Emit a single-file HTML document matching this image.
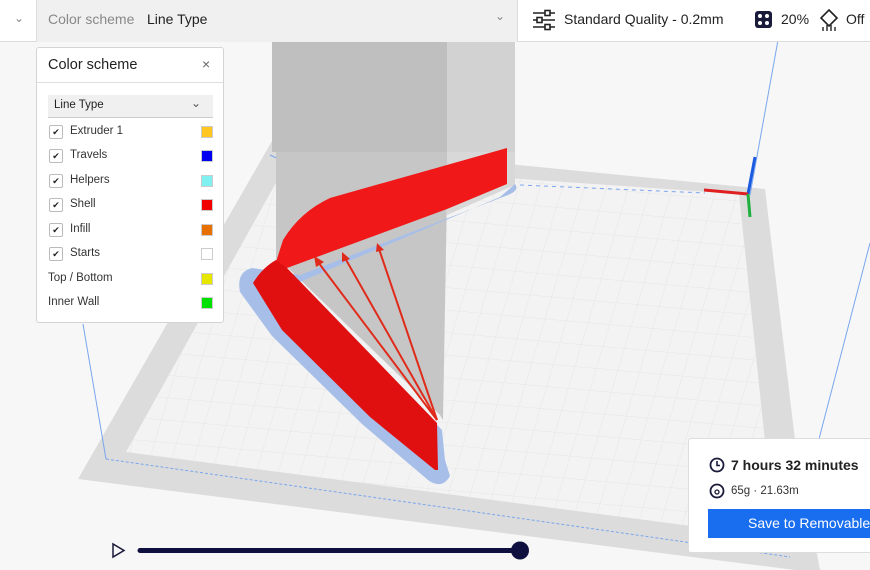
<!DOCTYPE html>
<html><head><meta charset="utf-8"><style>
*{margin:0;padding:0;box-sizing:border-box}
body{width:870px;height:570px;overflow:hidden;background:#f7f7f7;font-family:"Liberation Sans",sans-serif;position:relative;color:#222}
.top{position:absolute;left:0;top:0;width:870px;height:42px;background:#fff;border-bottom:1px solid #ddd}
.cs{position:absolute;left:36px;top:0;width:482px;height:42px;background:#f0f0f0;border-left:1px solid #ddd;border-right:1px solid #ddd}
.t{position:absolute;font-size:14px;white-space:nowrap}
.panel{position:absolute;left:36px;top:47px;width:188px;height:276px;background:#fff;border:1px solid #d4d4d4;border-radius:3px}
.row{position:absolute;left:12px;font-size:11.5px;color:#333}
.cb{position:absolute;left:12px;width:14px;height:14px;border:1px solid #bbb;border-radius:2px;background:#fff;font-size:9px;line-height:12px;text-align:center}
.sw{position:absolute;left:164px;width:12px;height:12px;border:1px solid #ccc}
.info{position:absolute;left:688px;top:438px;width:190px;height:115px;background:#fff;border:1px solid #ddd;border-radius:3px}
</style></head><body>
<svg width="870" height="570" style="position:absolute;left:0;top:0">
<defs>
<pattern id="g" width="22" height="22" patternUnits="userSpaceOnUse" patternTransform="skewX(-12) rotate(5)">
<path d="M22 0H0V22" fill="none" stroke="#e6e6e6" stroke-width="1"/></pattern>
</defs>
<polygon points="272,141 765,189 795,440 820,570 795,570 78,479" fill="#dcdcdc"/>
<polygon points="287,163 739,194 775,537 126,452" fill="#f3f3f3"/>
<polygon points="287,163 739,194 775,537 126,452" fill="url(#g)"/>
<line x1="778" y1="40" x2="750" y2="195" stroke="#7aa6ee" stroke-width="1"/>
<line x1="870" y1="243" x2="819" y2="439" stroke="#7aa6ee" stroke-width="1"/>
<line x1="83" y1="324" x2="106" y2="459" stroke="#7aa6ee" stroke-width="1"/>
<line x1="106" y1="459" x2="790" y2="557" stroke="#7aa6ee" stroke-width="1" stroke-dasharray="3,2"/>
<line x1="520" y1="185" x2="705" y2="193" stroke="#7aa6ee" stroke-width="1" stroke-dasharray="4,4"/>
<line x1="270" y1="155" x2="287" y2="163" stroke="#7aa6ee"/>
<!-- tower -->
<rect x="272" y="42" width="175" height="110" fill="#bfbfbf"/>
<rect x="447" y="42" width="68" height="110" fill="#d2d2d2"/>
<polygon points="276,152 447,152 447,195 443,420 440,415 285,265 276,262" fill="#c6c6c6"/>
<polygon points="447,152 515,152 515,185 447,215" fill="#d8d8d8"/>
<!-- blue halo -->
<path d="M515,184 Q520,190 508,195 L300,275 L252,268 Q236,272 240,292 L272,336 L362,424 L428,480 Q442,490 450,476 L445,460 L442,430 L300,282 L500,197 Z" fill="#a7bfe8"/>
<!-- red -->
<path d="M507,148 L507,184 L447,209 L287,268 L276,262 L283,240 Q300,212 330,198 Z" fill="#f01818"/>
<path d="M253,283 Q262,268 276,260 L287,268 L437,423 L438,470 L435,470 L370,417 L282,330 Z" fill="#e01010"/>
<g stroke="#e02a1a" stroke-width="2" fill="#e02a1a">
<line x1="437" y1="420" x2="318" y2="262"/><polygon points="314,256 324,262 316,267" stroke="none"/>
<line x1="437" y1="420" x2="345" y2="258"/><polygon points="342,252 350,259 342,262" stroke="none"/>
<line x1="437" y1="420" x2="379" y2="249"/><polygon points="377,243 384,250 376,252" stroke="none"/>
</g>
<!-- axes -->
<line x1="748" y1="194" x2="755" y2="157" stroke="#1a5be0" stroke-width="3"/>
<line x1="704" y1="190" x2="748" y2="194" stroke="#e02020" stroke-width="3"/>
<line x1="748" y1="194" x2="750" y2="217" stroke="#20b040" stroke-width="3"/>
<!-- slider -->
<polygon points="113,544 113,557 124,550.5" fill="none" stroke="#1a1a3a" stroke-width="1.5"/>
<line x1="140" y1="550.5" x2="520" y2="550.5" stroke="#101040" stroke-width="5" stroke-linecap="round"/>
<circle cx="520" cy="550.5" r="9" fill="#101040"/>
</svg>
<div class="top">
<div class="t" style="left:14px;top:11px;color:#888;font-size:12px">⌄</div>
<div class="cs">
<div class="t" style="left:11px;top:11px;color:#888">Color scheme</div>
<div class="t" style="left:110px;top:11px">Line Type</div>
<div class="t" style="left:458px;top:9px;color:#888;font-size:12px">⌄</div>
</div>
<svg style="position:absolute;left:532px;top:9px" width="24" height="22"><g stroke="#222" stroke-width="1.6" fill="#fff"><line x1="1" y1="4" x2="23" y2="4"/><line x1="1" y1="11" x2="23" y2="11"/><line x1="1" y1="18" x2="23" y2="18"/><rect x="13" y="1.5" width="5" height="5"/><rect x="5" y="8.5" width="5" height="5"/><rect x="13" y="15.5" width="5" height="5"/></g></svg>
<div class="t" style="left:564px;top:11px">Standard Quality - 0.2mm</div>
<svg style="position:absolute;left:754px;top:10px" width="19" height="19"><rect x="1" y="1" width="17" height="17" rx="3" fill="#1a1a3a"/><g fill="#fff"><circle cx="6" cy="6" r="2"/><circle cx="13" cy="6" r="2"/><circle cx="6" cy="13" r="2"/><circle cx="13" cy="13" r="2"/></g></svg>
<div class="t" style="left:781px;top:11px">20%</div>
<svg style="position:absolute;left:818px;top:8px" width="22" height="24"><path d="M11 2 L19 10 L11 18 L3 10 Z" fill="none" stroke="#222" stroke-width="1.6"/><path d="M5 19v4M9 17v6M13 17v6M17 19v4" stroke="#222" stroke-width="1.4"/></svg>
<div class="t" style="left:846px;top:11px">Off</div>
</div>
<div class="panel">
<div class="t" style="left:11px;top:9px;font-size:14.5px;color:#222">Color scheme</div>
<div class="t" style="left:165px;top:8px;font-size:14px;color:#666">×</div>
<div style="position:absolute;left:0;top:34px;width:186px;border-top:1px solid #ddd"></div>
<div style="position:absolute;left:11px;top:47px;width:165px;height:23px;background:#f0f0f0;border-bottom:1px solid #ccc"><div class="t" style="left:6px;top:4px;font-size:11.5px">Line Type</div><div class="t" style="left:143px;top:1px;font-size:12px;color:#555">⌄</div></div>
<div class="cb" style="top:77px">✔</div><div class="row" style="left:33px;top:77px">Extruder 1</div><div class="sw" style="top:78px;background:#ffc520"></div>
<div class="cb" style="top:101px">✔</div><div class="row" style="left:33px;top:101px">Travels</div><div class="sw" style="top:102px;background:#0000f0"></div>
<div class="cb" style="top:126px">✔</div><div class="row" style="left:33px;top:126px">Helpers</div><div class="sw" style="top:127px;background:#80f0f0"></div>
<div class="cb" style="top:150px">✔</div><div class="row" style="left:33px;top:150px">Shell</div><div class="sw" style="top:151px;background:#f00000"></div>
<div class="cb" style="top:175px">✔</div><div class="row" style="left:33px;top:175px">Infill</div><div class="sw" style="top:176px;background:#e87000"></div>
<div class="cb" style="top:199px">✔</div><div class="row" style="left:33px;top:199px">Starts</div><div class="sw" style="top:200px;background:#fff"></div>
<div class="row" style="left:11px;top:224px">Top / Bottom</div><div class="sw" style="top:225px;background:#e6e600"></div>
<div class="row" style="left:11px;top:248px">Inner Wall</div><div class="sw" style="top:249px;background:#00e000"></div>
</div>
<div class="info">
<svg style="position:absolute;left:20px;top:18px" width="16" height="16"><circle cx="8" cy="8" r="6.5" fill="none" stroke="#1a1a3a" stroke-width="1.8"/><path d="M8 4v4.5h3" fill="none" stroke="#1a1a3a" stroke-width="1.6"/></svg>
<div class="t" style="left:42px;top:18px;font-weight:bold;font-size:14px">7 hours 32 minutes</div>
<svg style="position:absolute;left:20px;top:44px" width="16" height="16"><circle cx="8" cy="8" r="6.5" fill="none" stroke="#1a1a3a" stroke-width="1.8"/><circle cx="8" cy="9" r="2" fill="none" stroke="#1a1a3a" stroke-width="1.3"/></svg>
<div class="t" style="left:42px;top:46px;font-size:11.5px;color:#333">65g · 21.63m</div>
<div style="position:absolute;left:19px;top:70px;width:170px;height:29px;background:#196ef0"><div class="t" style="left:40px;top:6px;color:#fff;font-size:14px">Save to Removable</div></div>
</div>
</body></html>
